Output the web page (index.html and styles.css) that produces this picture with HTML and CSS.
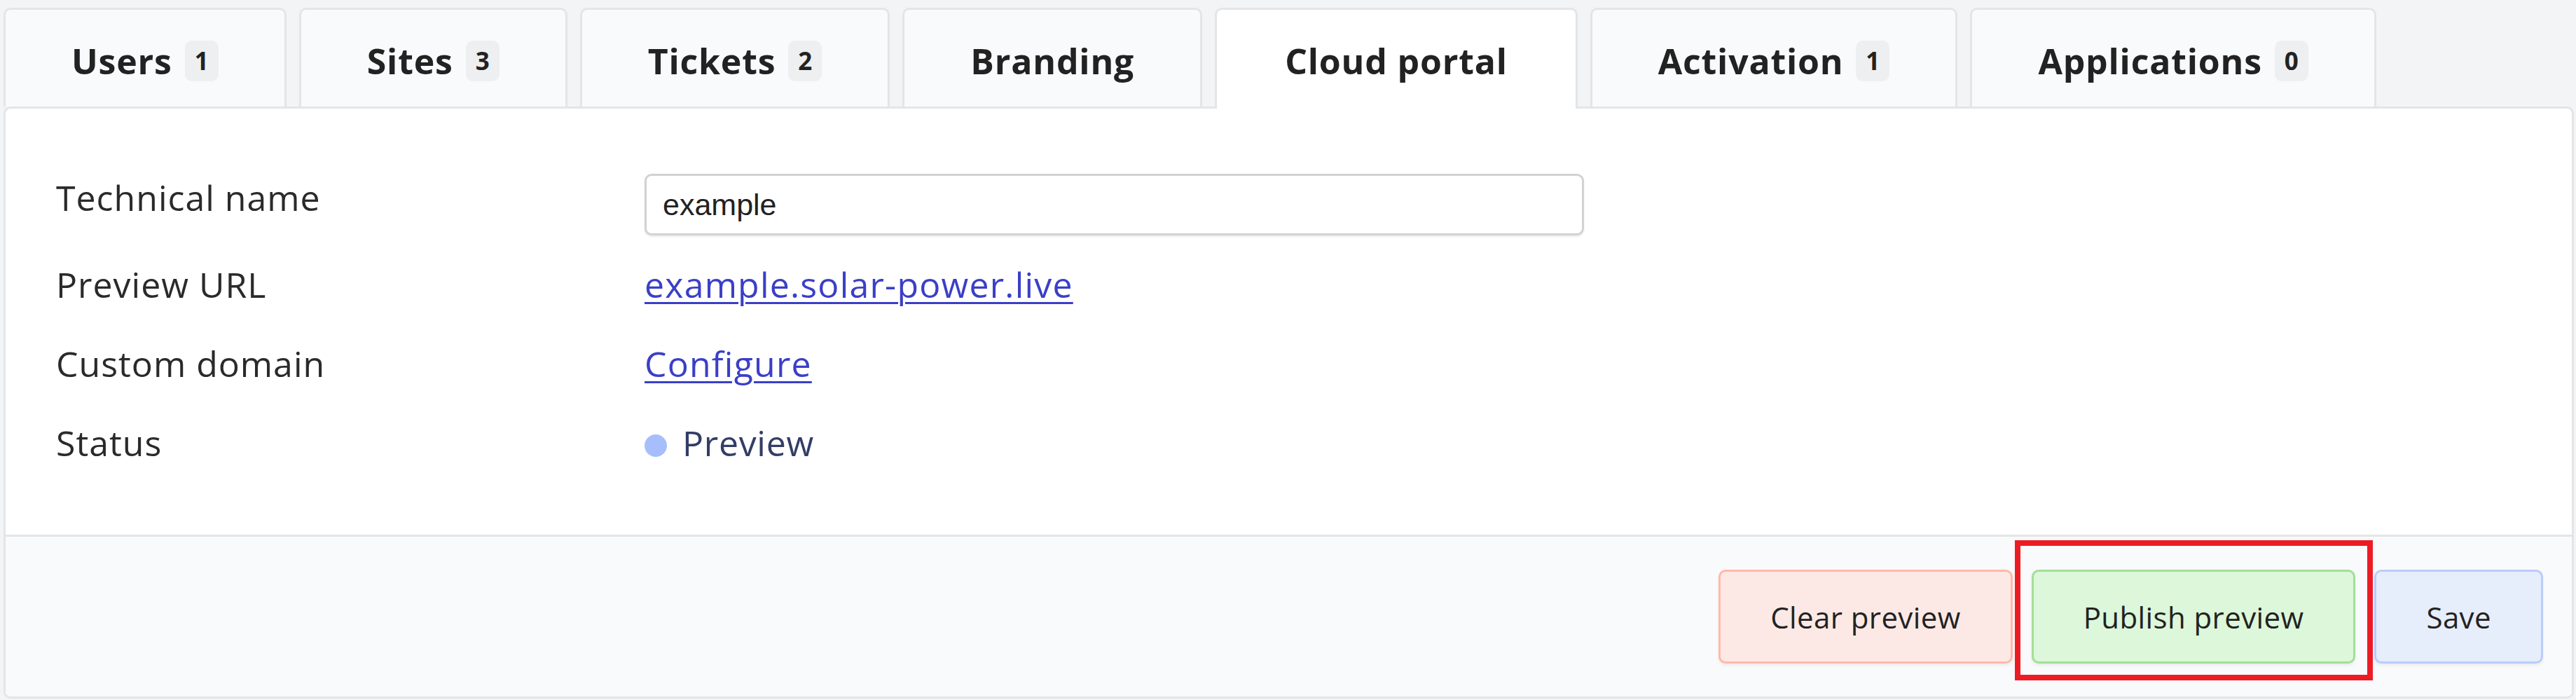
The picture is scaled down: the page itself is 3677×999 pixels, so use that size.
FILE: index.html
```html
<!DOCTYPE html>
<html lang="en">

<head>
    <meta charset="UTF-8">
    <meta name="viewport" content="width=device-width, initial-scale=1.0">
    <title>Cloud portal</title>
    <link rel="stylesheet" href="styles.css">
</head>

<body>
    <div class="page">
        <nav class="tabs">
            <a class="tab">Users<span class="count">1</span></a>
            <a class="tab">Sites<span class="count">3</span></a>
            <a class="tab">Tickets<span class="count">2</span></a>
            <a class="tab">Branding</a>
            <a class="tab tab-active">Cloud portal</a>
            <a class="tab">Activation<span class="count">1</span></a>
            <a class="tab">Applications<span class="count">0</span></a>
        </nav>

        <section class="panel">
            <div class="panel-body">
                <div class="field field-input">
                    <label class="field-label" for="technical_name">Technical name</label>
                    <div class="field-value">
                        <input class="text-input" type="text" id="technical_name" name="technical_name" value="example" />
                    </div>
                </div>
                <div class="field">
                    <span class="field-label">Preview URL</span>
                    <div class="field-value"><a class="link" href="#">example.solar-power.live</a></div>
                </div>
                <div class="field">
                    <span class="field-label">Custom domain</span>
                    <div class="field-value"><a class="link" href="#">Configure</a></div>
                </div>
                <div class="field">
                    <span class="field-label">Status</span>
                    <div class="field-value status"><span class="status-dot"></span>Preview</div>
                </div>
            </div>

            <div class="panel-footer">
                <button class="btn btn-clear">Clear preview</button>
                <div class="btn-marked">
                    <button class="btn btn-publish">Publish preview</button>
                    <span class="mark"></span>
                </div>
                <button class="btn btn-save">Save</button>
            </div>
        </section>
    </div>
</body>

</html>
```

FILE: styles.css
```css
body {
    margin: 0;
    background-color: #f3f4f6;
    font-family: "Open Sans", "Liberation Sans", sans-serif;
    color: #222;
}

.page {
    padding: 11px 3px 0 5px;
}

/* tab strip */
.tabs {
    display: flex;
    gap: 18px;
    align-items: flex-end;
    position: relative;
    z-index: 1;
}

.tab {
    display: flex;
    align-items: center;
    height: 141px;
    padding: 8px 94px 0;
    box-sizing: border-box;
    border: 3px solid #e4e5e7;
    border-bottom: none;
    border-radius: 10px 10px 0 0;
    background-color: #f9fafb;
    font-size: 50px;
    font-weight: 700;
    letter-spacing: 0.8px;
    color: #222;
    text-decoration: none;
}

/* the open tab runs over the card border */
.tab-active {
    height: 144px;
    margin-bottom: -3px;
    padding: 5px 97px 0;
    background-color: #fff;
}

.count {
    display: inline-block;
    margin-left: 18px;
    padding: 0 14px;
    line-height: 58px;
    border-radius: 10px;
    background-color: #eeeff0;
    font-size: 35px;
    font-weight: 700;
    letter-spacing: 0;
}

/* card */
.panel {
    border: 3px solid #e4e5e7;
    border-radius: 10px;
    background-color: #fff;
    overflow: hidden;
}

.panel-body {
    display: flex;
    flex-direction: column;
    gap: 45px;
    padding: 93px 72px 97px;
}

.field {
    display: grid;
    grid-template-columns: 840px 1341px;
    align-items: start;
    font-size: 50px;
    line-height: 68px;
    letter-spacing: 1px;
}

.field-input {
    height: 79px;
}

.field-label {
    color: #2a2a2a;
}

.text-input {
    display: block;
    width: 1341px;
    height: 88px;
    box-sizing: border-box;
    padding: 0 23px;
    border: 3px solid #d2d2d2;
    border-radius: 10px;
    box-shadow: 0 2px 3px rgba(0, 0, 0, 0.08);
    font-family: "Liberation Sans", Arial, sans-serif;
    font-size: 43px;
    color: #222;
    outline: none;
}

.link {
    color: #3a3fc8;
    letter-spacing: 1.2px;
    text-decoration-thickness: 3px;
    text-underline-offset: 6px;
}

.status {
    display: flex;
    align-items: center;
    color: #333d66;
    letter-spacing: 0.7px;
}

.status-dot {
    width: 32px;
    height: 32px;
    margin: 8px 22px 0 0;
    border-radius: 50%;
    background-color: #a6befc;
}

/* footer with actions */
.panel-footer {
    display: flex;
    justify-content: flex-end;
    gap: 27px;
    padding: 47px 41px 47px;
    border-top: 3px solid #e4e5e7;
    background-color: #f9fafb;
}

.btn {
    height: 134px;
    padding: 0 71px;
    border: 3px solid;
    border-radius: 10px;
    box-shadow: 0 3px 4px rgba(0, 0, 0, 0.06);
    font-family: "Open Sans", "Liberation Sans", sans-serif;
    font-size: 42px;
    letter-spacing: 0.4px;
    color: #222;
}

.btn-clear {
    background-color: #fce9e5;
    border-color: #ffb9a9;
}

.btn-publish {
    background-color: #dcf7d9;
    border-color: #a2df97;
}

.btn-save {
    background-color: #e6edfb;
    border-color: #b9cdfb;
}

.btn-marked {
    position: relative;
}

.mark {
    position: absolute;
    left: -24px;
    right: -25px;
    top: -42px;
    bottom: -24px;
    border: 8px solid #ed1c24;
}
```
